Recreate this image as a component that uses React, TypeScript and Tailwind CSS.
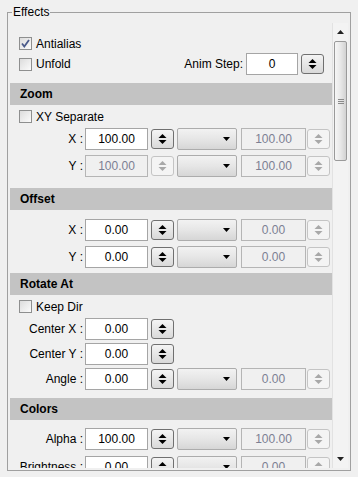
import React from "react";

// Small Win7-ish spin button (up/down arrows)
function Spinner({ disabled = false }: { disabled?: boolean }) {
  return (
    <div
      className={`flex h-[20px] w-[23px] shrink-0 flex-col items-center justify-center gap-[2px] rounded-[3px] border ${
        disabled
          ? "border-[#c4c4c4] bg-[#f4f4f4]"
          : "border-[#707070] bg-gradient-to-b from-[#f4f4f4] to-[#d9d9d9]"
      }`}
    >
      <svg width="9" height="4" viewBox="0 0 9 4">
        <path d="M0.5 4 L4.5 0 L8.5 4 Z" fill={disabled ? "#a8a8a8" : "#000"} />
      </svg>
      <svg width="9" height="4" viewBox="0 0 9 4">
        <path d="M0.5 0 L4.5 4 L8.5 0 Z" fill={disabled ? "#a8a8a8" : "#000"} />
      </svg>
    </div>
  );
}

function Dropdown() {
  return (
    <div className="flex h-[22px] w-[60px] shrink-0 items-center justify-end rounded-[2px] border border-[#acacac] bg-gradient-to-b from-[#f2f2f2] via-[#e6e6e6] to-[#d6d6d6] pr-[6px]">
      <svg width="7" height="4" viewBox="0 0 7 4">
        <path d="M0 0 L7 0 L3.5 4 Z" fill="#000" />
      </svg>
    </div>
  );
}

function Input({
  value,
  disabled = false,
  width = "w-[63px]",
}: {
  value: string;
  disabled?: boolean;
  width?: string;
}) {
  return (
    <div
      className={`flex h-[22px] ${width} shrink-0 items-center justify-center border ${
        disabled
          ? "border-[#b5b5b5] bg-[#f0f0f0] text-[#7c7f93]"
          : "border-[#a5a5a5] bg-white text-black"
      }`}
    >
      {value}
    </div>
  );
}

function Checkbox({ checked = false, label }: { checked?: boolean; label: string }) {
  return (
    <div className="flex items-center">
      <div className="ml-[11px] flex h-[13px] w-[13px] items-center justify-center border border-[#8e8f8f] bg-gradient-to-br from-[#dcdcdc] to-[#fbfbfb]">
        {checked && (
          <svg width="9" height="9" viewBox="0 0 9 9">
            <path
              d="M1 4.5 L3.3 7.5 L8 1"
              fill="none"
              stroke="#4a5a8a"
              strokeWidth="1.8"
            />
          </svg>
        )}
      </div>
      <span className="ml-[4px]">{label}</span>
    </div>
  );
}

function Header({ title, className = "" }: { title: string; className?: string }) {
  return (
    <div
      className={`ml-[2px] flex h-[22px] w-[322px] items-center bg-[#c3c3c3] pl-[10px] font-bold ${className}`}
    >
      {title}
    </div>
  );
}

// label : [value] [spin] [dropdown] [disabled value] [spin]
function FieldRow({
  label,
  value,
  disabled = false,
  other,
  full = true,
  className = "",
}: {
  label: string;
  value: string;
  disabled?: boolean;
  other?: string;
  full?: boolean;
  className?: string;
}) {
  return (
    <div className={`flex h-[22px] items-center ${className}`}>
      <span className="w-[75px] shrink-0 text-right">{label}</span>
      <div className="ml-[2px]">
        <Input value={value} disabled={disabled} />
      </div>
      <div className="ml-[3px]">
        <Spinner disabled={disabled} />
      </div>
      {full && (
        <>
          <div className="ml-[3px]">
            <Dropdown />
          </div>
          <div className="ml-[4px]">
            <Input value={other ?? ""} disabled width="w-[65px]" />
          </div>
          <div className="ml-[1px]">
            <Spinner disabled />
          </div>
        </>
      )}
    </div>
  );
}

function ScrollBar() {
  return (
    <div className="flex h-full w-[16px] shrink-0 flex-col border-l border-[#e2e2e2] bg-[#f3f3f3]">
      <div className="flex h-[18px] items-center justify-center">
        <svg width="7" height="4" viewBox="0 0 7 4">
          <path d="M0 4 L3.5 0 L7 4 Z" fill="#222" />
        </svg>
      </div>
      <div className="mx-auto flex h-[120px] w-[13px] items-center justify-center rounded-[2px] border border-[#9a9a9a] bg-gradient-to-r from-[#f6f6f6] via-[#e8e8e8] to-[#d2d2d2]">
        <div className="flex flex-col gap-[1px]">
          <div className="h-[1px] w-[6px] bg-[#8a8a8a]" />
          <div className="h-[1px] w-[6px] bg-[#8a8a8a]" />
          <div className="h-[1px] w-[6px] bg-[#8a8a8a]" />
        </div>
      </div>
      <div className="flex-1" />
      <div className="flex h-[18px] items-center justify-center">
        <svg width="7" height="4" viewBox="0 0 7 4">
          <path d="M0 0 L7 0 L3.5 4 Z" fill="#222" />
        </svg>
      </div>
    </div>
  );
}

export default function App() {
  return (
    <div className="h-[477px] w-[358px] overflow-hidden bg-[#f0f0f0] pt-[12px] font-['Liberation_Sans',Arial,sans-serif] text-[12px] leading-[14px] text-black">
      <div className="relative ml-[7px] h-[459px] w-[344px] border border-[#a0a0a0] pt-[10px]">
        {/* legend on the frame line */}
        <span className="absolute -top-[8px] left-[4px] bg-[#f0f0f0] px-[1px]">Effects</span>

        <div className="flex h-[445px]">
          <div className="w-[324px] shrink-0 overflow-hidden pt-[11px]">
            {/* general */}
            <div className="flex h-[19px] items-center">
              <Checkbox checked label="Antialias" />
            </div>
            <div className="flex h-[22px] items-center justify-between pr-[8px]">
              <Checkbox label="Unfold" />
              <div className="flex items-center">
                <span>Anim Step:</span>
                <div className="ml-[3px]">
                  <Input value="0" width="w-[52px]" />
                </div>
                <div className="ml-[3px]">
                  <Spinner />
                </div>
              </div>
            </div>

            {/* Zoom */}
            <Header title="Zoom" className="mt-[8px]" />
            <div className="flex h-[23px] items-center">
              <Checkbox label="XY Separate" />
            </div>
            <FieldRow label="X :" value="100.00" other="100.00" />
            <FieldRow label="Y :" value="100.00" other="100.00" disabled className="mt-[5px]" />

            {/* Offset */}
            <Header title="Offset" className="mt-[11px]" />
            <FieldRow label="X :" value="0.00" other="0.00" className="mt-[9px]" />
            <FieldRow label="Y :" value="0.00" other="0.00" className="mt-[5px]" />

            {/* Rotate At */}
            <Header title="Rotate At" className="mt-[5px]" />
            <div className="flex h-[23px] items-center">
              <Checkbox label="Keep Dir" />
            </div>
            <FieldRow label="Center X :" value="0.00" full={false} />
            <FieldRow label="Center Y :" value="0.00" full={false} className="mt-[3px]" />
            <FieldRow label="Angle :" value="0.00" other="0.00" className="mt-[3px]" />

            {/* Colors */}
            <Header title="Colors" className="mt-[8px]" />
            <FieldRow label="Alpha :" value="100.00" other="100.00" className="mt-[8px]" />
            <FieldRow label="Brightness :" value="0.00" other="0.00" className="mt-[6px]" />
          </div>
          <ScrollBar />
        </div>
      </div>
    </div>
  );
}
